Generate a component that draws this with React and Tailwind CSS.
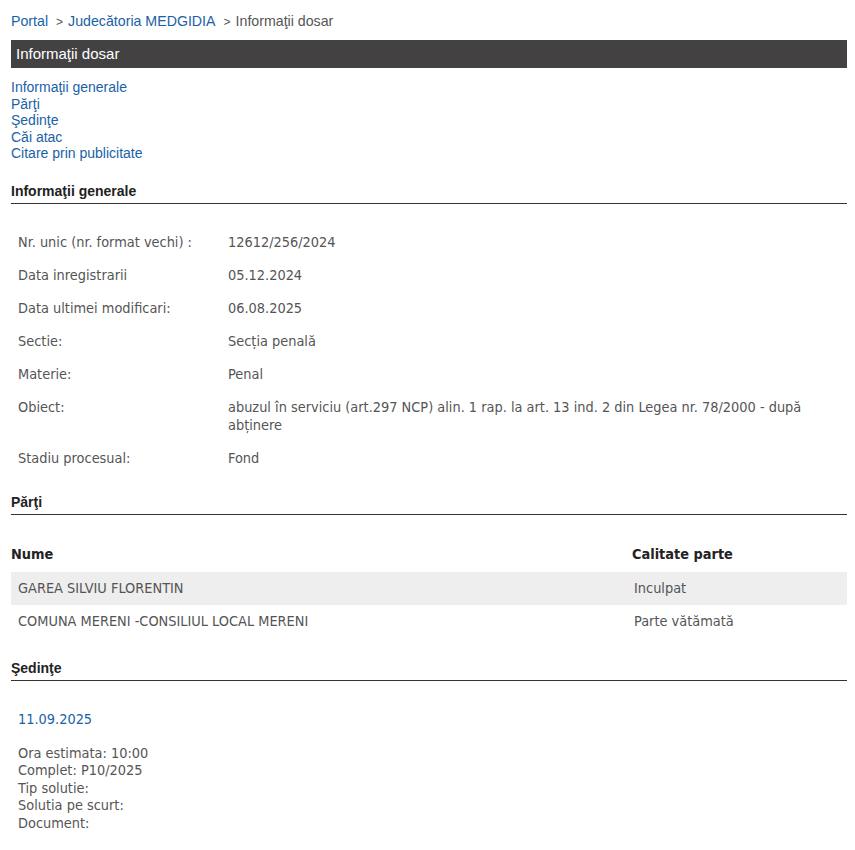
const rows = [
  ['Nr. unic (nr. format vechi) :', '12612/256/2024'],
  ['Data inregistrarii', '05.12.2024'],
  ['Data ultimei modificari:', '06.08.2025'],
  ['Sectie:', 'Secția penală'],
  ['Materie:', 'Penal'],
  ['Obiect:', 'abuzul în serviciu (art.297 NCP) alin. 1 rap. la art. 13 ind. 2 din Legea nr. 78/2000 - după abținere'],
  ['Stadiu procesual:', 'Fond'],
];

const parti = [
  ['GAREA SILVIU FLORENTIN', 'Inculpat'],
  ['COMUNA MERENI -CONSILIUL LOCAL MERENI', 'Parte vătămată'],
];

const tahoma = "font-['DejaVu_Sans_Condensed','DejaVu_Sans',sans-serif]";

const SectionTitle = ({ children }) => (
  <div className="border-b border-[#333] pb-[4px] font-['Liberation_Sans',Arial,sans-serif] text-[14px] font-bold text-[#222] leading-[16px]">
    {children}
  </div>
);

export default function App() {
  return (
    <div className="bg-white min-h-[850px] px-[11px] pt-[12px] font-['Liberation_Sans',Arial,sans-serif] text-[14px] w-[847px] box-content pr-0">
      {/* breadcrumb */}
      <div className="text-[14.2px] leading-[18px] text-[#555]">
        <span className="text-[#1a62a6]">Portal</span>
        <span className="ml-[8px] mr-[5px] text-[12px]">&gt;</span>
        <span className="text-[#1a62a6]">Judecătoria MEDGIDIA</span>
        <span className="ml-[8px] mr-[5px] text-[12px]">&gt;</span>
        <span>Informaţii dosar</span>
      </div>

      <div className="mt-[9px] h-[28px] bg-[#434142] text-white text-[15px] leading-[28px] pl-[5px] w-[836px]">
        Informaţii dosar
      </div>

      <div className="mt-[11px] flex flex-col text-[14px] leading-[16.5px] text-[#1a62a6]">
        <span>Informaţii generale</span>
        <span>Părţi</span>
        <span>Şedinţe</span>
        <span>Căi atac</span>
        <span>Citare prin publicitate</span>
      </div>

      <div className="w-[836px]">
        <div className="mt-[21px]">
          <SectionTitle>Informaţii generale</SectionTitle>
        </div>
        <table className={`mt-[22px] w-full ${tahoma} text-[14.4px] text-[#555]`}>
          <tbody>
            {rows.map(([k, v]) => (
              <tr key={k}>
                <td className="w-[217px] align-top pl-[7px] py-[7.5px] leading-[18px]">{k}</td>
                <td className="align-top py-[7.5px] leading-[18px] pr-[20px]">{v}</td>
              </tr>
            ))}
          </tbody>
        </table>

        <div className="mt-[19px]">
          <SectionTitle>Părţi</SectionTitle>
        </div>
        <table className={`mt-[21px] w-full ${tahoma} text-[14.4px] text-[#555]`}>
          <thead>
            <tr className="text-[#222] font-bold text-left">
              <th className="py-[9px] leading-[18px] font-bold">Nume</th>
              <th className="w-[215px] py-[9px] leading-[18px] font-bold">Calitate parte</th>
            </tr>
          </thead>
          <tbody>
            {parti.map(([n, c], i) => (
              <tr key={n} className={i === 0 ? 'bg-[#eeeeee]' : ''}>
                <td className="pl-[7px] py-[7.5px] leading-[18px]">{n}</td>
                <td className="pl-[2px] py-[7.5px] leading-[18px]">{c}</td>
              </tr>
            ))}
          </tbody>
        </table>

        <div className="mt-[22px]">
          <SectionTitle>Şedinţe</SectionTitle>
        </div>
        <div className={`pl-[7px] ${tahoma} text-[14.4px] text-[#555]`}>
          <div className="mt-[29px] text-[#1a62a6] leading-[18px]">11.09.2025</div>
          <div className="mt-[17px] leading-[17.5px] flex flex-col">
            <span>Ora estimata: 10:00</span>
            <span>Complet: P10/2025</span>
            <span>Tip solutie:</span>
            <span>Solutia pe scurt:</span>
            <span>Document:</span>
          </div>
        </div>
      </div>
    </div>
  );
}
